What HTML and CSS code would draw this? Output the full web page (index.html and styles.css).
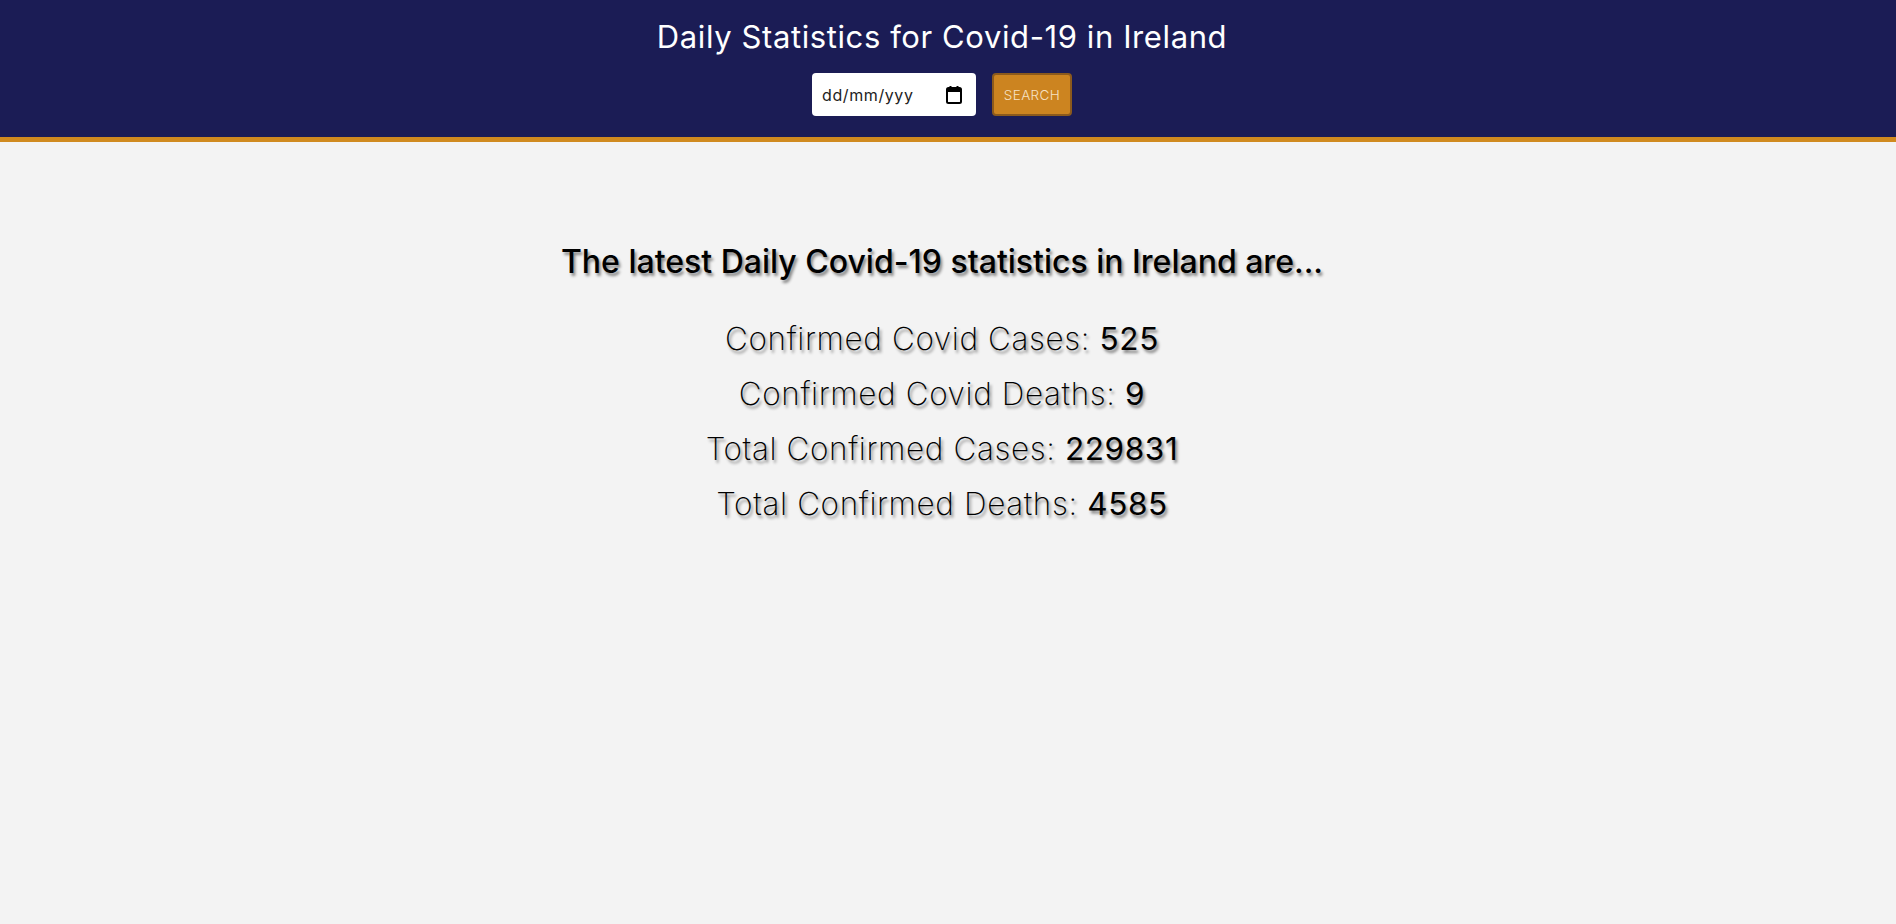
FILE: index.html
```html
<!DOCTYPE html>
<html lang="en">
<head>
<meta charset="utf-8">
<title>Daily Statistics for Covid-19 in Ireland</title>
<link rel="stylesheet" href="styles.css">
</head>
<body>
<header class="site-header">
  <h1 class="site-title">Daily Statistics for Covid-19 in Ireland</h1>
  <form class="search-form">
    <div class="date-field">
      <span class="date-text">dd/mm/yyy</span>
      <svg class="cal-icon" width="16" height="18" viewBox="0 0 16 18" aria-hidden="true">
        <rect x="1" y="2" width="14" height="15" rx="1.5" fill="none" stroke="#000" stroke-width="2"/>
        <rect x="1" y="2" width="14" height="4" fill="#000"/>
        <rect x="3.5" y="0" width="2" height="3" fill="#000"/>
        <rect x="10.5" y="0" width="2" height="3" fill="#000"/>
      </svg>
    </div>
    <button type="button" class="search-btn">SEARCH</button>
  </form>
</header>
<main class="stats">
  <h2 class="stats-heading">The latest Daily Covid-19 statistics in Ireland are...</h2>
  <ul class="stats-list">
    <li>Confirmed Covid Cases: <strong>525</strong></li>
    <li>Confirmed Covid Deaths: <strong>9</strong></li>
    <li>Total Confirmed Cases: <strong>229831</strong></li>
    <li>Total Confirmed Deaths: <strong>4585</strong></li>
  </ul>
</main>
</body>
</html>
```
FILE: styles.css
```css
html, body {
  margin: 0;
  padding: 0;
}
body {
  background: #f3f3f3;
  font-family: Inter, "Open Sans", "DejaVu Sans", sans-serif;
  color: #000;
  min-height: 924px;
}
.site-header {
  background: #1b1c55;
  border-bottom: 5px solid #d08a1f;
  padding: 17px 12px 21px 0;
  display: flex;
  flex-direction: column;
  align-items: center;
  gap: 16px;
}
.site-title {
  margin: 0;
  color: #fff;
  font-weight: 400;
  font-size: 31px;
  letter-spacing: 0.6px;
  line-height: 40px;
}
.search-form {
  display: flex;
  gap: 16px;
  margin: 0;
}
.date-field {
  width: 164px;
  height: 43px;
  box-sizing: border-box;
  background: #fff;
  border-radius: 4px;
  display: flex;
  align-items: center;
  justify-content: space-between;
  padding: 0 14px 0 10px;
}
.date-text {
  font-size: 16px;
  letter-spacing: 0.6px;
  color: #222;
  font-weight: 400;
}
.cal-icon {
  display: block;
}
.search-btn {
  width: 80px;
  height: 43px;
  box-sizing: border-box;
  background: #cc8420;
  border: 2px solid #8c5a1c;
  border-radius: 4px;
  color: #f6e2c4;
  font-family: inherit;
  font-size: 13.5px;
  font-weight: 300;
  letter-spacing: 0.4px;
  padding: 0;
}
.stats {
  padding: 98px 12px 0 0;
  display: flex;
  flex-direction: column;
  align-items: center;
  text-align: center;
}
.stats-heading {
  margin: 0;
  font-size: 32px;
  font-weight: 500;
  line-height: 44px;
  text-shadow: 2px 3px 3px rgba(0, 0, 0, 0.45);
}
.stats-list {
  list-style: none;
  margin: 27px 0 0;
  padding: 0;
}
.stats-list li {
  font-size: 31.5px;
  letter-spacing: 0.6px;
  font-weight: 200;
  line-height: 55px;
  text-shadow: 2px 3px 3px rgba(0, 0, 0, 0.45);
}
.stats-list strong {
  font-weight: 400;
}
```
